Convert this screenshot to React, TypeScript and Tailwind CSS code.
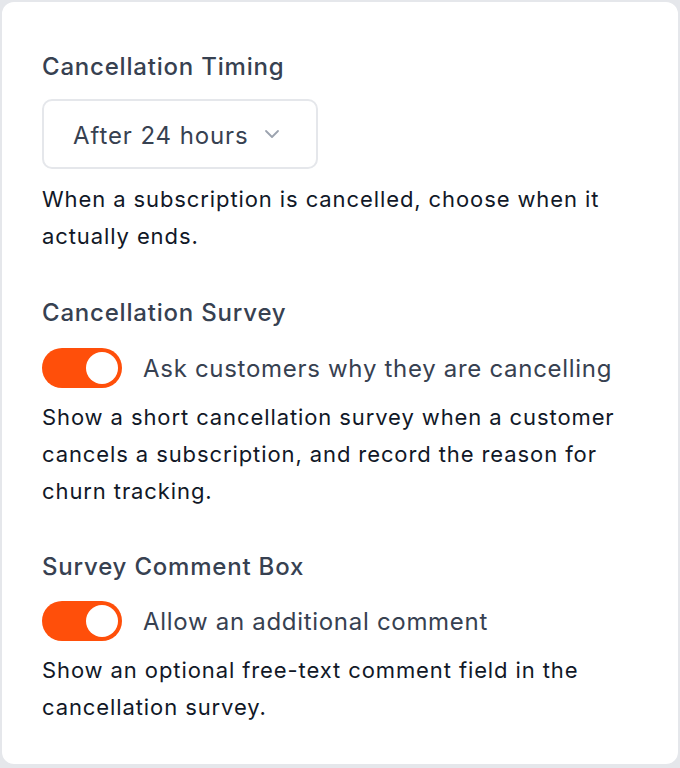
import React from 'react'

function Toggle({ on }: { on: boolean }) {
  return (
    <button
      type="button"
      className={`relative w-[80px] h-[40px] rounded-full shrink-0 ${on ? 'bg-[#ff4f0a]' : 'bg-gray-300'}`}
    >
      <span
        className={`absolute top-[4px] w-[32px] h-[32px] rounded-full bg-white ${on ? 'left-[44px]' : 'left-[4px]'}`}
      />
    </button>
  )
}

export default function App() {
  const [survey, setSurvey] = React.useState(true)
  const [comment, setComment] = React.useState(true)

  return (
    <div className="w-[680px] h-[768px] bg-[#e5e7eb] font-['Inter',sans-serif]">
      <div className="h-[766px] bg-white border-2 border-[#e5e7eb] rounded-[14px] px-[40px] pt-[49px]">
        {/* Timing */}
        <div className="text-[24px] leading-[32px] font-medium tracking-[0.8px] text-[#374151]">Cancellation Timing</div>
        <div className="mt-[16px] w-[276px] h-[70px] border-2 border-[#e5e7eb] rounded-[10px] flex items-center pl-[29px] pt-[3px] gap-[11px] text-[24px] tracking-[0.9px] text-[#374151]">
          <span>After 24 hours</span>
          <svg width="24" height="24" viewBox="0 0 24 24" fill="none" stroke="#9ca3af" strokeWidth="1.8" strokeLinecap="round" strokeLinejoin="round" className="-mt-[3px]">
            <path d="m6 9 6 6 6-6" />
          </svg>
        </div>
        <p className="mt-[12px] text-[22px] leading-[37px] tracking-[0.9px] text-[#111827]">
          When a subscription is cancelled, choose when it actually ends.
        </p>

        {/* Survey */}
        <div className="mt-[42px] text-[24px] leading-[32px] font-medium tracking-[0.8px] text-[#374151]">Cancellation Survey</div>
        <div className="mt-[19px] flex items-center gap-[21px]" onClick={() => setSurvey(!survey)}>
          <Toggle on={survey} />
          <span className="text-[24px] tracking-[0.7px] text-[#374151] pt-[2px]">Ask customers why they are cancelling</span>
        </div>
        <p className="mt-[11px] text-[22px] leading-[37px] tracking-[0.9px] text-[#111827]">
          Show a short cancellation survey when a customer cancels a subscription, and record the reason for churn tracking.
        </p>

        {/* Comment box */}
        <div className="mt-[41px] text-[24px] leading-[32px] font-medium tracking-[0.8px] text-[#374151]">Survey Comment Box</div>
        <div className="mt-[18px] flex items-center gap-[21px]" onClick={() => setComment(!comment)}>
          <Toggle on={comment} />
          <span className="text-[24px] tracking-[0.7px] text-[#374151] pt-[2px]">Allow an additional comment</span>
        </div>
        <p className="mt-[11px] text-[22px] leading-[37px] tracking-[0.9px] text-[#111827]">
          Show an optional free-text comment field in the cancellation survey.
        </p>
      </div>
    </div>
  )
}
